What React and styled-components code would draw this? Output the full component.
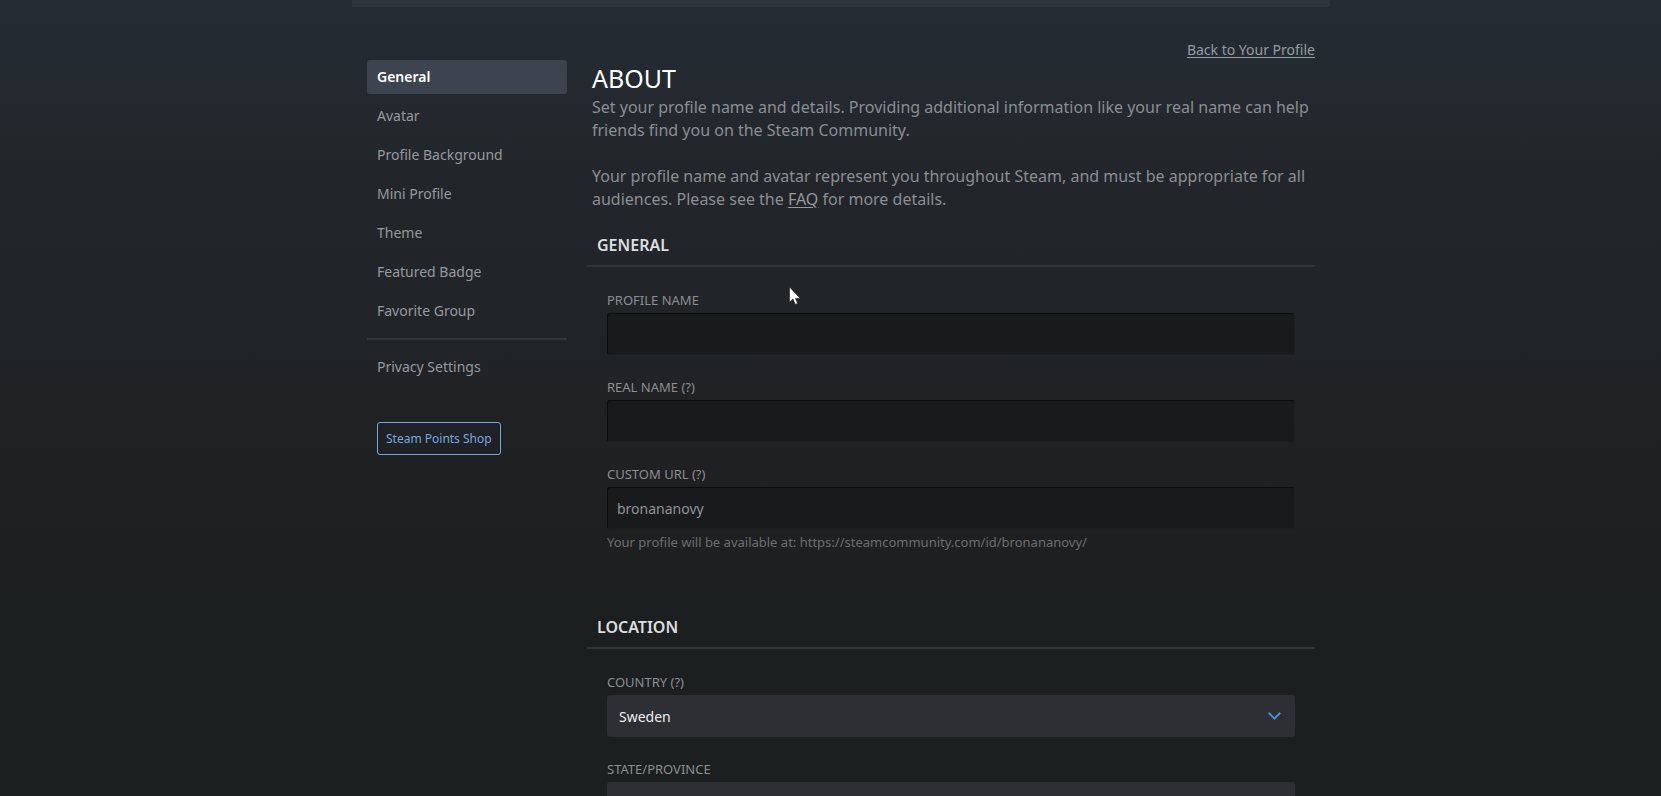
import React from "react";
import styled, { createGlobalStyle } from "styled-components";

const Global = createGlobalStyle`
  * { box-sizing: border-box; }
  body {
    margin: 0;
    background: #1c1f20;
    color: #8b8e92;
    font-family: "Noto Sans", sans-serif;
    font-size: 14px;
  }
`;

const Page = styled.div`
  height: 100vh;
  overflow-y: auto;
  scrollbar-width: none;
  padding-left: 21px;
  background: linear-gradient(#242b33 0%, #23292f 12%, #22262a 22%, #212528 38%, #202123 54%, #1e1f21 70%, #1c1f20 76%, #1c1f20 100%);
`;

const Container = styled.div`
  max-width: 978px;
  margin: 0 auto;
`;

const Banner = styled.div`
  height: 7px;
  background: #2e343e;
`;

const Columns = styled.div`
  display: flex;
  gap: 20px;
  padding: 0 15px;
`;

const Sidebar = styled.nav`
  flex: 0 0 200px;
  display: flex;
  flex-direction: column;
  align-items: stretch;
  gap: 5px;
  padding-top: 53px;
`;

const NavLink = styled.a`
  height: 34px;
  padding: 0 10px;
  border-radius: 3px;
  line-height: 34px;
  font-size: 14px;
  font-weight: ${(p) => (p.$active ? 600 : 400)};
  color: ${(p) => (p.$active ? "#ffffff" : "#969a9e")};
  background: ${(p) => (p.$active ? "#3d4450" : "transparent")};
  text-decoration: none;
`;

const NavDivider = styled.hr`
  width: 100%;
  height: 2px;
  margin: 5px 0;
  border: 0;
  background: #323539;
`;

const ShopButton = styled.button`
  align-self: flex-start;
  height: 33px;
  margin: 33px 10px 0;
  padding: 0 8px;
  border: 1px solid #7fa6dc;
  border-radius: 3px;
  background: #1e2126;
  color: #7fa6dc;
  font: 400 12px "Noto Sans", sans-serif;
`;

const Main = styled.main`
  position: relative;
  flex: 1;
  min-width: 0;
`;

const BackRow = styled.div`
  display: flex;
  justify-content: flex-end;
  padding-top: 33px;
  line-height: 20px;
`;

const TextLink = styled.a`
  color: #969a9e;
  text-decoration: underline;
  text-underline-offset: 2px;
`;

const Title = styled.h1`
  margin: 2px 5px;
  font-size: 25px;
  line-height: 32px;
  font-weight: 400;
  color: #ffffff;
  text-transform: uppercase;
`;

const Intro = styled.p`
  margin: 0 5px 23px;
  font-size: 16px;
  line-height: 23px;
`;

const Section = styled.section`
  margin-bottom: 64px;
`;

const SectionTitle = styled.h2`
  margin: 0;
  padding: 0 10px 8px;
  border-bottom: 2px solid #323538;
  font-size: 16px;
  line-height: 23px;
  font-weight: 600;
  color: #dcdee0;
  text-transform: uppercase;
`;

const Fields = styled.div`
  display: flex;
  flex-direction: column;
  gap: 22px;
  padding: 23px 20px 0;
`;

const Field = styled.div`
  display: flex;
  flex-direction: column;
`;

const Label = styled.label`
  margin-bottom: 3px;
  font-size: 13px;
  line-height: 20px;
  text-transform: uppercase;
`;

const TextInput = styled.input`
  height: 42px;
  padding: 0 9px;
  border: 1px solid;
  border-color: #0b0c0e #1c1e20 #1c1e20 #0b0c0e;
  border-radius: 3px;
  background: #191a1c;
  color: #919497;
  font: 400 14px "Noto Sans", sans-serif;
`;

const Hint = styled.p`
  margin: 3px 0 0;
  font-size: 13px;
  line-height: 20px;
  color: #6b6e71;
`;

const SelectBox = styled.div`
  display: grid;
  align-items: center;

  > * { grid-area: 1 / 1; }
  > svg {
    justify-self: end;
    margin-right: 14px;
    pointer-events: none;
  }
`;

const Select = styled.select`
  appearance: none;
  width: 100%;
  height: 42px;
  padding: 0 12px;
  border: 0;
  border-radius: 3px;
  background: #2e2f33;
  color: #eceef0;
  font: 400 14px "Noto Sans", sans-serif;
`;

const Pointer = styled.svg`
  position: absolute;
  top: 280px;
  left: 202px;
`;

const NAV = ["General", "Avatar", "Profile Background", "Mini Profile", "Theme", "Featured Badge", "Favorite Group"];

function InputField({ id, label, value = "", hint }) {
  return (
    <Field>
      <Label htmlFor={id}>{label}</Label>
      <TextInput id={id} type="text" defaultValue={value} />
      {hint && <Hint>{hint}</Hint>}
    </Field>
  );
}

function SelectField({ id, label, options }) {
  return (
    <Field>
      <Label htmlFor={id}>{label}</Label>
      <SelectBox>
        <Select id={id}>
          {options.map((o) => (
            <option key={o}>{o}</option>
          ))}
        </Select>
        <svg width="13" height="8" viewBox="0 0 13 8" fill="none" stroke="#3f8fd8" strokeWidth="2" aria-hidden="true">
          <path d="M0.7 0.8L6.5 6.6L12.3 0.8" />
        </svg>
      </SelectBox>
    </Field>
  );
}

export default function App() {
  return (
    <Page>
      <Global />
      <Container>
        <Banner />
        <Columns>
          <Sidebar>
            {NAV.map((item, i) => (
              <NavLink key={item} href="#" $active={i === 0}>
                {item}
              </NavLink>
            ))}
            <NavDivider />
            <NavLink href="#">Privacy Settings</NavLink>
            <ShopButton type="button">Steam Points Shop</ShopButton>
          </Sidebar>
          <Main>
            <BackRow>
              <TextLink href="#">Back to Your Profile</TextLink>
            </BackRow>
            <Title>About</Title>
            <Intro>
              Set your profile name and details. Providing additional information like your real name can help friends
              find you on the Steam Community.
            </Intro>
            <Intro>
              Your profile name and avatar represent you throughout Steam, and must be appropriate for all audiences.
              Please see the <TextLink href="#">FAQ</TextLink> for more details.
            </Intro>
            <Section>
              <SectionTitle>General</SectionTitle>
              <Fields>
                <InputField id="profile-name" label="Profile name" />
                <InputField id="real-name" label="Real name (?)" />
                <InputField
                  id="custom-url"
                  label="Custom URL (?)"
                  value="bronananovy"
                  hint="Your profile will be available at: https://steamcommunity.com/id/bronananovy/"
                />
              </Fields>
            </Section>
            <Section>
              <SectionTitle>Location</SectionTitle>
              <Fields>
                <SelectField id="country" label="Country (?)" options={["Sweden"]} />
                <SelectField id="state" label="State/Province" options={[""]} />
              </Fields>
            </Section>
            <Pointer width="13" height="20" viewBox="0 0 13 20" aria-hidden="true">
              <path d="M0.5 0V15.2L3.9 12L6.3 17.4L8.7 16.3L6.4 11.4H11.2Z" fill="#ffffff" stroke="#15171a" strokeWidth="0.6" />
            </Pointer>
          </Main>
        </Columns>
      </Container>
    </Page>
  );
}
